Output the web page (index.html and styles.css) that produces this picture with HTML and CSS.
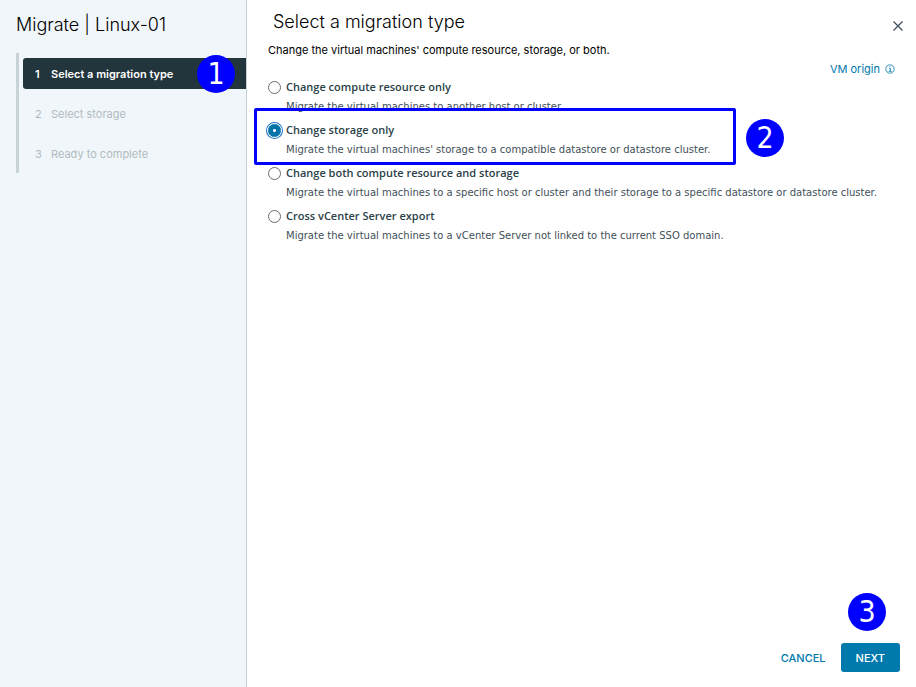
FILE: index.html
```html
<!DOCTYPE html>
<html lang="en">
<head>
<meta charset="utf-8">
<title>Migrate | Linux-01</title>
<link rel="stylesheet" href="styles.css">
</head>
<body>
<div class="wizard">
  <aside class="sidebar">
    <h1 class="wizard-title">Migrate | Linux-01</h1>
    <nav class="steps" aria-label="Wizard steps">
      <button class="step active" type="button" aria-current="step"><span class="step-number">1</span><span>Select a migration type</span><span class="callout callout-step">1</span></button>
      <button class="step" type="button" disabled><span class="step-number">2</span><span>Select storage</span></button>
      <button class="step" type="button" disabled><span class="step-number">3</span><span>Ready to complete</span></button>
    </nav>
  </aside>
  <main class="page">
    <header class="page-header">
      <h2 class="page-title">Select a migration type</h2>
      <button class="close" type="button" aria-label="Close">
        <svg width="12" height="12" viewBox="0 0 12 12" fill="none" stroke="#3c4b57" stroke-width="1.2"><path d="M1.500 1.500L10.500 10.500M10.500 1.500L1.500 10.500"/></svg>
      </button>
    </header>
    <p class="intro">Change the virtual machines' compute resource, storage, or both.</p>
    <div class="origin-row">
      <a class="origin" href="#">VM origin
        <svg width="10" height="10" viewBox="0 0 10 10" fill="none" stroke="#2187b5"><circle cx="5" cy="5" r="4.200" stroke-width=".9"/><path d="M4 4.400H5.300V7.300M3.700 7.300H6.700M4.500 2.700H5.500"/></svg>
      </a>
    </div>
    <form class="options">
      <div class="option">
        <input class="radio" type="radio" name="type" id="compute">
        <label class="option-label" for="compute">Change compute resource only</label>
        <p class="option-text">Migrate the virtual machines to another host or cluster.</p>
      </div>
      <div class="option highlighted">
        <input class="radio" type="radio" name="type" id="storage" checked>
        <label class="option-label" for="storage">Change storage only</label>
        <p class="option-text">Migrate the virtual machines' storage to a compatible datastore or datastore cluster.</p>
        <span class="callout callout-option">2</span>
      </div>
      <div class="option">
        <input class="radio" type="radio" name="type" id="both">
        <label class="option-label" for="both">Change both compute resource and storage</label>
        <p class="option-text">Migrate the virtual machines to a specific host or cluster and their storage to a specific datastore or datastore cluster.</p>
      </div>
      <div class="option">
        <input class="radio" type="radio" name="type" id="export">
        <label class="option-label" for="export">Cross vCenter Server export</label>
        <p class="option-text">Migrate the virtual machines to a vCenter Server not linked to the current SSO domain.</p>
      </div>
    </form>
    <footer class="actions">
      <button class="button cancel" type="button">CANCEL</button>
      <button class="button next" type="button">NEXT<span class="callout callout-next">3</span></button>
    </footer>
  </main>
</div>
</body>
</html>
```
FILE: styles.css
```css
* {
  box-sizing: border-box;
}

body {
  margin: 0;
  font-family: Inter, "Liberation Sans", sans-serif;
  font-size: 11px;
  line-height: 20px;
  color: #21333b;
  background: #fff;
}

h1, h2, p {
  margin: 0;
}

button {
  font: inherit;
  border: 0;
  background: none;
}

.wizard {
  display: grid;
  grid-template-columns: 247px 1fr;
  min-height: 100vh;
}

.sidebar {
  padding: 13px 0 0 16px;
  background: #f0f6f9;
  border-right: 1px solid #c4cfd4;
}

.wizard-title {
  font-size: 18px;
  font-weight: 300;
  line-height: 24px;
  color: #000;
}

.steps {
  display: flex;
  flex-direction: column;
  gap: 9px;
  margin-top: 16px;
  padding: 5px 0 4px 4px;
  border-left: 3px solid #c8d3d8;
}

.step {
  position: relative;
  display: flex;
  align-items: center;
  gap: 9px;
  height: 31px;
  padding: 0 12px;
  border-radius: 3px 0 0 3px;
  text-align: left;
  color: #b0bbc0;
}

.step.active {
  background: #22343c;
  color: #fff;
  font-weight: 600;
}

.step-number {
  width: 7px;
}

.page {
  display: flex;
  flex-direction: column;
  padding: 10px 16px 15px 21px;
}

.page-header {
  display: flex;
  justify-content: space-between;
  padding-left: 5px;
}

.page-title {
  font-size: 18px;
  font-weight: 300;
  line-height: 24px;
  color: #000;
}

.close {
  display: flex;
  align-items: end;
  width: 24px;
  height: 22px;
  margin-right: -10px;
  padding: 0 6px;
}

.intro {
  margin-top: 6px;
  color: #000;
}

.origin-row {
  display: flex;
  justify-content: flex-end;
  height: 17px;
  padding-right: 5px;
}

.origin {
  display: flex;
  align-items: center;
  gap: 5px;
  height: 18px;
  color: #0079ad;
  text-decoration: none;
}

.options {
  display: flex;
  flex-direction: column;
  gap: 4px;
}

.option {
  position: relative;
  display: grid;
  grid-template-columns: 13px 1fr;
  column-gap: 5px;
  align-items: center;
}

.radio {
  appearance: none;
  width: 13px;
  height: 13px;
  margin: 0;
  border: 1px solid #6b6b6b;
  border-radius: 50%;
  background: #fff;
}

.radio:checked {
  border-color: #0074a8;
  background: radial-gradient(circle, #fff 1px, #0074a8 2px);
  box-shadow: 0 0 0 1px #fff, 0 0 0 2px #1a73c8;
}

.option-label {
  font-family: "Open Sans", sans-serif;
  font-weight: 600;
  color: #2b3f48;
}

.option-text {
  grid-column: 2;
  font-family: "DejaVu Sans", sans-serif;
  font-size: 10px;
  line-height: 19px;
  color: #3f5059;
}

.highlighted::after {
  content: "";
  box-sizing: border-box;
  position: absolute;
  top: -12px;
  left: -14px;
  width: 482px;
  height: 57px;
  border: 3px solid #00f;
  border-radius: 2px;
  pointer-events: none;
}

.actions {
  display: flex;
  justify-content: flex-end;
  margin-top: auto;
}

.button {
  position: relative;
  height: 29px;
  padding: 0 15px;
  border-radius: 3px;
  font-weight: 500;
  color: #0079ad;
}

.next {
  background: #0079ad;
  color: #fff;
}

.callout {
  position: absolute;
  width: 38px;
  height: 38px;
  border-radius: 50%;
  background: #00f;
  color: #fff;
  font: 30px/38px "DejaVu Sans Condensed", "DejaVu Sans", sans-serif;
  text-align: center;
}

.callout-step {
  top: -3px;
  right: 11px;
}

.callout-option {
  top: -1px;
  left: 478px;
}

.callout-next {
  right: 14px;
  bottom: 41px;
}
```
